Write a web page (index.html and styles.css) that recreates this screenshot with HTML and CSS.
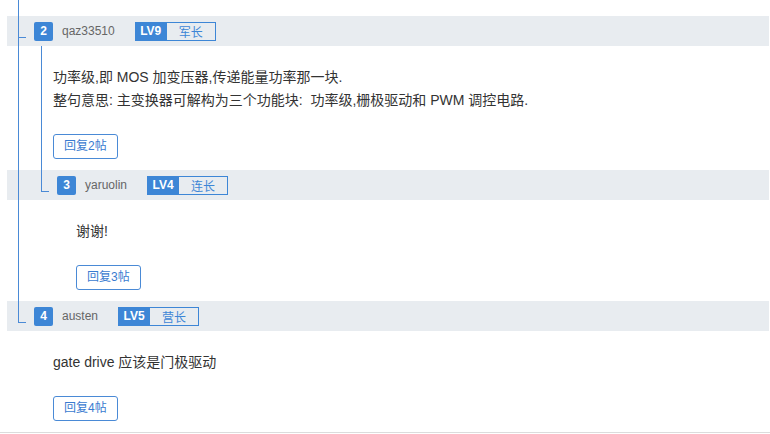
FILE: index.html
```html
<!DOCTYPE html>
<html lang="zh-CN">
<head>
<meta charset="utf-8">
<title>回复</title>
<link rel="stylesheet" href="styles.css">
</head>
<body>
<div class="thread">
  <div class="tail"></div>

  <div class="node l1 has-kids">
    <div class="head">
      <span class="num">2</span>
      <span class="name">qaz33510</span>
      <span class="lv"><span class="lv-num">LV9</span><span class="lv-rank">军长</span></span>
    </div>
    <div class="body">
      <p class="text">功率级,即 MOS 加变压器,传递能量功率那一块.</p>
      <p class="text">整句意思: 主变换器可解构为三个功能块:&nbsp; 功率级,栅极驱动和 PWM 调控电路.</p>
      <div class="actions"><span class="btn">回复2帖</span></div>
    </div>
    <div class="children">
      <div class="node l2 last">
        <div class="head">
          <span class="num">3</span>
          <span class="name">yaruolin</span>
          <span class="lv"><span class="lv-num">LV4</span><span class="lv-rank">连长</span></span>
        </div>
        <div class="body">
          <p class="text">谢谢!</p>
          <div class="actions"><span class="btn">回复3帖</span></div>
        </div>
      </div>
    </div>
  </div>

  <div class="node l1 last">
    <div class="head">
      <span class="num">4</span>
      <span class="name">austen</span>
      <span class="lv"><span class="lv-num">LV5</span><span class="lv-rank">营长</span></span>
    </div>
    <div class="body">
      <p class="text">gate drive 应该是门极驱动</p>
      <div class="actions"><span class="btn">回复4帖</span></div>
    </div>
  </div>
</div>
</body>
</html>
```

FILE: styles.css
```css
* { box-sizing: border-box; }
html, body { margin: 0; padding: 0; background: #fff; }
body {
  width: 770px;
  font-family: "Liberation Sans", "Noto Sans CJK SC", sans-serif;
  color: #333;
}
.thread { border-bottom: 1px solid #dcdcdc; }

.tail { position: relative; height: 16px; }
.tail::before {
  content: ""; position: absolute; left: 18px; top: 0; bottom: 0;
  width: 1px; background: #4a8ad6;
}

.node { position: relative; }
.node::before {
  content: ""; position: absolute; top: 0; bottom: 0;
  width: 1px; background: #4a8ad6; z-index: 1;
}
.node::after {
  content: ""; position: absolute; top: 21px;
  width: 8px; height: 1px; background: #4a8ad6; z-index: 1;
}
.node.last::before { bottom: auto; height: 22px; }
.node.l1::before, .node.l1::after { left: 18px; }
.node.l2::before, .node.l2::after { left: 41px; }

.head {
  margin: 0 1px 0 7px;
  height: 30px;
  background: #e8ecf0;
  display: flex;
  align-items: center;
}
.l1 > .head { padding-left: 27px; }
.l2 > .head { padding-left: 50px; }

.num {
  width: 19px; height: 19px;
  background: #3d86d6; color: #fff;
  border-radius: 2px;
  font-size: 12px; font-weight: bold;
  display: flex; align-items: center; justify-content: center;
  margin-right: 9px;
}
.name { font-size: 12px; color: #666; margin-right: 20px; }
.lv { display: flex; height: 19px; }
.lv-num {
  width: 32px; background: #3d86d6; color: #fff;
  font-size: 12px; font-weight: bold;
  display: flex; align-items: center; justify-content: center;
}
.lv-rank {
  width: 49px; border: 1px solid #3d86d6; border-left: none;
  color: #3d86d6; font-size: 12px;
  display: flex; align-items: center; justify-content: center;
}

.body { position: relative; padding: 20px 0 11px 0; }
.l1 > .body { padding-left: 53px; }
.l2 > .body { padding-left: 76px; }
.has-kids.l1 > .body::before {
  content: ""; position: absolute; left: 41px; top: 0; bottom: 0;
  width: 1px; background: #4a8ad6;
}
.text { margin: 0; font-size: 14px; line-height: 23px; color: #333; }
.actions { display: flex; margin-top: 22px; }
.btn {
  display: inline-block;
  border: 1px solid #4a8ad6;
  border-radius: 3px;
  color: #3a7bd0;
  font-size: 12px;
  line-height: 23px;
  padding: 0 10px;
  background: #fff;
}
```
